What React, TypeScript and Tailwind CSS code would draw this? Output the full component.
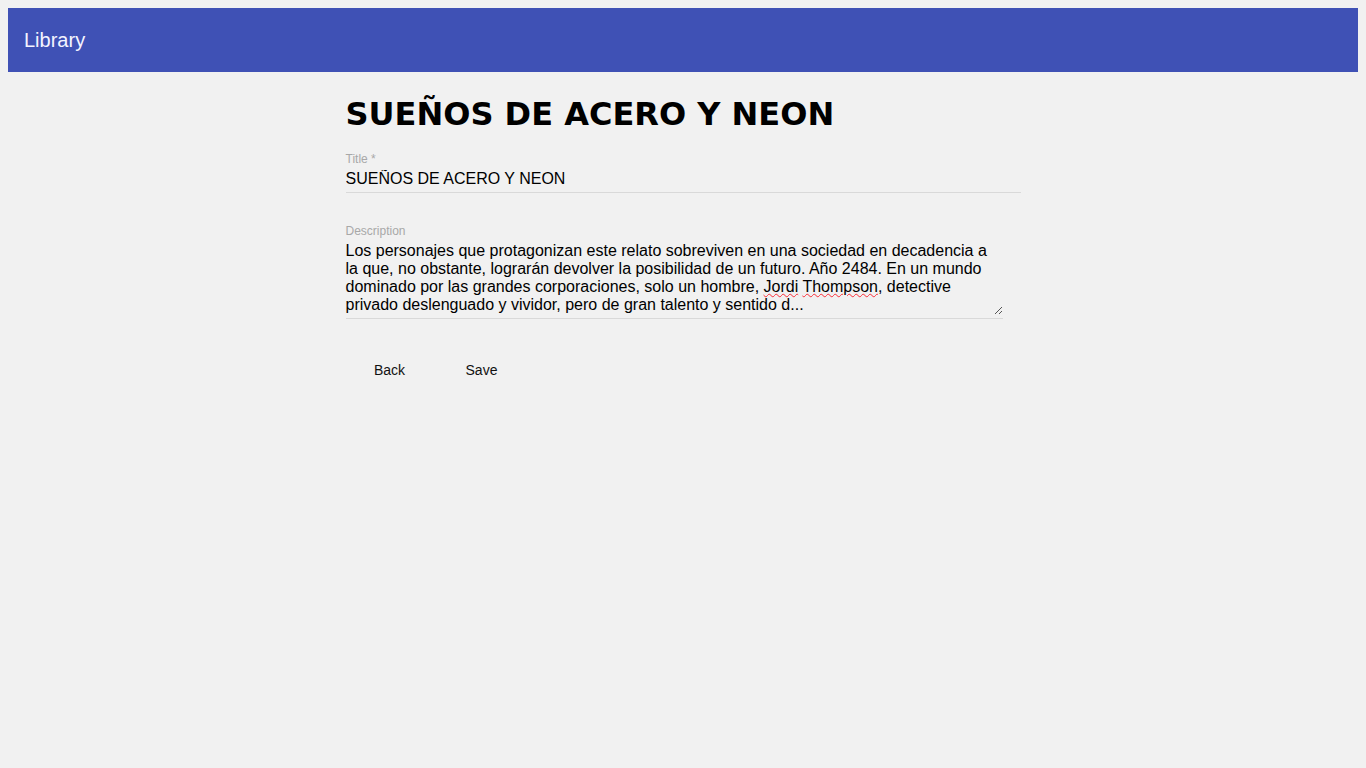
import React from "react";

const sans = "font-['Liberation_Sans',Arial,sans-serif]";

export default function App() {
  return (
    <div className={`min-h-[768px] bg-[#f1f1f1] p-2 ${sans}`}>
      {/* Toolbar */}
      <header className="flex h-16 items-center bg-[#3f51b5] px-4">
        <span className="text-[20px] text-[#f4f4ff]">Library</span>
      </header>

      {/* Form */}
      <main className="mx-auto w-1/2">
        <h1 className="mt-[22px] mb-[18px] font-['DejaVu_Sans',Verdana,sans-serif] text-[32px] font-bold leading-[40px] text-black">
          SUEÑOS DE ACERO Y NEON
        </h1>

        <div className="border-b border-[#d9d9d9] pb-[4px]">
          <label className="block text-[12px] leading-[14px] text-[#a8a8a8]">Title *</label>
          <input
            className="mt-[4px] block w-full bg-transparent text-[16px] leading-[18px] text-black outline-none"
            defaultValue="SUEÑOS DE ACERO Y NEON"
          />
        </div>

        <div className="mt-[31px] w-[657px] border-b border-[#d9d9d9] pb-[3px]">
          <label className="block text-[12px] leading-[14px] text-[#a8a8a8]">Description</label>
          <div className="relative mt-[4px] h-[73px] text-[16px] leading-[18px] text-black">
            Los personajes que protagonizan este relato sobreviven en una sociedad en decadencia a<br />
            la que, no obstante, lograrán devolver la posibilidad de un futuro. Año 2484. En un mundo<br />
            dominado por las grandes corporaciones, solo un hombre,{" "}
            <span className="underline decoration-red-500 decoration-wavy decoration-1">Jordi</span>{" "}
            <span className="underline decoration-red-500 decoration-wavy decoration-1">Thompson</span>, detective
            <br />
            privado deslenguado y vividor, pero de gran talento y sentido d...
            <svg className="absolute right-0 bottom-0" width="9" height="9" viewBox="0 0 9 9">
              <path d="M8 1 L1 8 M8 5 L5 8" stroke="#555" strokeWidth="1" />
            </svg>
          </div>
        </div>

        <div className="mt-[33px] flex gap-1">
          <button className="h-9 min-w-[88px] rounded px-4 text-[14px] text-[#111]">Back</button>
          <button className="h-9 min-w-[88px] rounded px-4 text-[14px] text-[#111]">Save</button>
        </div>
      </main>
    </div>
  );
}
